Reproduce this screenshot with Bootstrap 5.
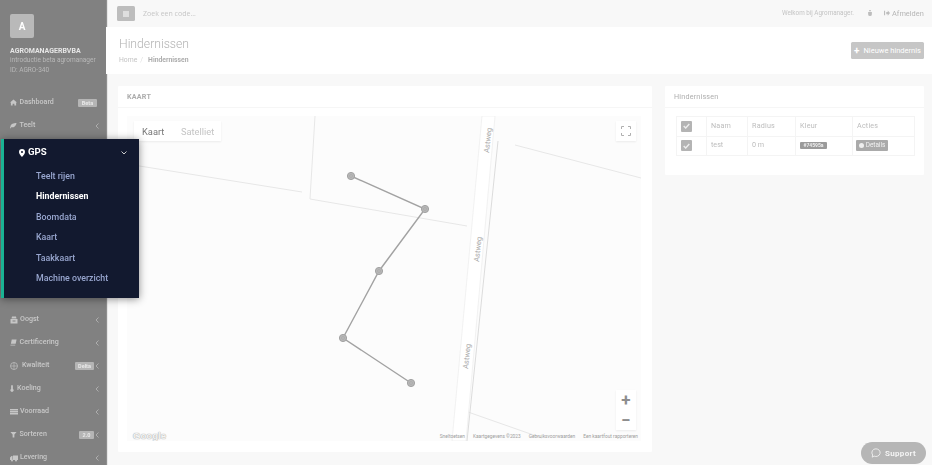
<!DOCTYPE html>
<html lang="nl">
  <head>
    <meta charset="UTF-8" />
    <meta name="viewport" content="width=device-width, initial-scale=1.0" />
    <title>Hindernissen</title>

    <link
      href="https://cdn.jsdelivr.net/npm/bootstrap@5.3.0/dist/css/bootstrap.min.css"
      rel="stylesheet"
    />

    <style>
      html, body { height: 100%; overflow: hidden; }
      body {
        background: #f8f8f8;
        color: #bbb;
        font-family: "Roboto", "Liberation Sans", sans-serif;
        font-size: 7.5px;
        filter: blur(0.45px);
      }
      .shell { height: 465px; }
      /* own layer, keeps the small grey text free of colour fringes */
      .panel-head, .tbl-wrap, .map-type span, .page-head > div, .topbar span { will-change: transform; }

      /* sidebar */
      .side { width: 106px; flex: none; background: #818181; color: #d2d2d2; overflow: hidden; box-shadow: 1px 0 1px #8f8f8f; }
      .side-top { height: 91px; padding: 14px 0 0 10px; white-space: nowrap; }
      .logo-box { width: 24px; height: 24px; background: #b9b9b9; border-radius: 2px; color: #fff; font: 700 10px "Roboto", sans-serif; }
      .org-name { margin-top: 9px; font-weight: 700; font-size: 7px; line-height: 9px; color: #e6e6e6; }
      .org-sub { font-size: 6.5px; line-height: 9.5px; color: #b8b8b8; }
      .side-item { height: 23px; padding: 0 7px 0 10px; font-weight: 500; font-size: 7.1px; color: #c8c8c8; }
      .side-item svg.ico { width: 7px; height: 7px; fill: #c6c6c6; flex: none; margin-right: 2.5px; }
      .side-item svg.ico.wide { width: 8px; height: 8px; margin-right: 2px; }
      .side-item svg.ico.globe { width: 8px; height: 8px; margin-right: 4px; }
      .side-item svg.ico.thin { width: 4px; margin-right: 3px; }
      .side-gap { height: 171px; }
      .chev-l { width: 4px; height: 6px; fill: none; stroke: #adadad; stroke-width: 1; flex: none; }
      .side-tag { background: #b5b5b5; color: #e8e8e8; font-size: 5.5px; font-weight: 700; line-height: 8px; border-radius: 1px; text-align: center; }
      .tag-beta { width: 19px; margin-right: 2px; }
      .tag-delta { width: 19px; margin-right: 1px; }
      .tag-num { width: 15px; margin-right: 1px; }

      /* highlighted menu */
      .gps-menu {
        position: absolute; left: 1px; top: 139px; width: 138px; height: 159px;
        background: #12192f; border-left: 3px solid #1ab394;
        box-shadow: 0 1px 8px rgba(0, 0, 0, .45);
      }
      .gps-head { height: 27px; padding: 0 12px 0 15px; color: #fff; font-size: 9.6px; font-weight: 700; }
      .gps-head svg.pin { width: 6px; height: 8px; fill: #fff; margin-right: 3px; }
      .gps-head svg.down { width: 6px; height: 4px; fill: none; stroke: #ccc; stroke-width: 1; }
      .gps-sub { padding-left: 32px; height: 20.4px; line-height: 20.4px; font-size: 8.8px; font-weight: 500; color: #98a6cf; }
      .gps-sub.on { color: #fff; font-weight: 700; }

      /* top */
      .topbar { height: 27px; padding: 0 8px 0 11px; }
      .menu-btn { width: 18px; height: 15px; background: #bdbdbd; border-radius: 1.5px; }
      .menu-btn span { width: 6px; height: 6px; background: #dedede; }
      .search-txt { margin-left: 8px; color: #c6c6c6; font: 7px "Open Sans", sans-serif; }
      .top-right { font-size: 6.3px; color: #c4c4c4; }
      .top-right svg { width: 6px; height: 6px; fill: #bdbdbd; }
      .bug-ico { margin-left: 13px; }
      .out-ico { margin-left: 11px; }
      .logout { color: #b5b5b5; font-size: 7.4px; margin-left: 2px; }
      .page-head { height: 47px; background: #fff; padding: 0 8px 0 13px; }
      .page-title { font-size: 12.2px; font-weight: 300; line-height: 16px; color: #b3b3b3; margin: 0 0 4px; }
      .crumb-row { font-size: 6.8px; line-height: 9px; color: #c3c3c3; }
      .crumb-row b { color: #adadad; font-weight: 700; margin-left: 5px; }
      .crumb-row i { font-style: normal; margin-left: 3px; color: #ddd; }
      .new-btn { width: 73px; height: 17px; padding: 0; border: 0; background: #c6c6c6; color: #fff; font-size: 7.5px; border-radius: 1.5px; white-space: nowrap; }
      .new-btn b { font-size: 10px; line-height: 8px; }

      /* panels */
      .content { padding: 12px 8px 0 12px; gap: 13px; }
      .panel { border: 0; border-radius: 1px; background: #fff; }
      .panel-head { height: 22px; padding: 1px 8px 0 9px; border-bottom: 1px solid #f6f6f6; color: #adadad; font-size: 7.2px; letter-spacing: .2px; }
      .panel-map { width: 534px; height: 366px; }
      .panel-list { width: 259px; height: 89px; }
      .map-wrap { position: relative; margin: 8px 11px 0 9px; width: 514px; height: 325px; background: #fcfcfc; overflow: hidden; }
      .map-wrap svg.roads { display: block; width: 514px; height: 325px; }
      .astweg { font: 7.5px "Roboto", sans-serif; fill: #a9a9a9; }
      .map-ctl { position: absolute; background: #fff; box-shadow: 0 1px 2px rgba(0, 0, 0, .07); }
      .map-type { left: 7px; top: 5px; height: 20px; width: 87px; font: 9.3px "Roboto", sans-serif; color: #c4c4c4; }
      .map-type .cur { color: #777; padding: 0 8px; }
      .map-type .oth { padding: 0 8px 0 9px; }
      .map-full { right: 5px; top: 5px; width: 20px; height: 20px; }
      .map-zoom { right: 5px; top: 274px; width: 20px; height: 40px; }
      .map-zoom div { height: 20px; color: #8e8e8e; font: 700 17px/20px "Roboto", sans-serif; text-align: center; }
      .g-logo { position: absolute; left: 6px; bottom: 0; font: 700 9.6px "Liberation Sans", sans-serif; color: #f4f4f4; text-shadow: 0 0 1px #aaa, 0 0 1px #aaa; }
      .map-attr { position: absolute; right: 3px; bottom: 0; gap: 8px; font: 4.8px/8px "Roboto", sans-serif; color: #9c9c9c; white-space: nowrap; }

      /* table */
      .tbl-wrap { padding: 8px 10px 0 11px; }
      .tbl { width: 238px; table-layout: fixed; margin: 0; font-size: 7.2px; color: #bcbcbc; border-color: #f4f4f4; }
      .tbl > :not(caption) > * > * { padding: 0 0 0 4px; height: 19.5px; vertical-align: middle; background: transparent; color: #bcbcbc; border-color: #f4f4f4; }
      .tbl th { font-weight: 400; letter-spacing: .2px; }
      .tick { width: 11px; height: 11px; background: #b4b4b4; border-radius: 1px; }
      .tick svg { width: 7px; height: 6px; fill: none; stroke: #eee; stroke-width: 1.4; }
      .color-tag { background: #9a9a9a; color: #eee; font-size: 5px; font-weight: 700; line-height: 7px; padding: 0 3px; width: 27px; border-radius: 1px; }
      .det-btn { height: 11px; width: 32px; background: #aaa; color: #f2f2f2; font-size: 6.4px; border-radius: 1px; margin-left: -1px; }
      .det-btn span { width: 5px; height: 5px; margin-right: 2px; border-radius: 50%; background: #eee; }

      .support-btn {
        position: absolute; left: 861px; top: 442px; width: 65px; height: 22px;
        background: #b6b6b6; color: #f4f4f4; border-radius: 11px;
        font: 700 8px "Roboto", sans-serif; letter-spacing: .3px;
      }
      .support-btn svg { width: 10px; height: 10px; fill: none; stroke: #f4f4f4; stroke-width: 1; margin-right: 4px; }
    </style>
  </head>

  <body>
    <div class="shell d-flex position-relative">
      <aside class="side">
        <div class="side-top">
          <div class="logo-box d-flex align-items-center justify-content-center">A</div>
          <div class="org-name">AGROMANAGERBVBA</div>
          <div class="org-sub">introductie beta agromanager</div>
          <div class="org-sub">ID: AGRO-340</div>
        </div>

        <div class="side-item d-flex align-items-center">
          <svg class="ico" viewBox="0 0 16 16"><path d="M8 1 0 8h2v7h4v-4h4v4h4V8h2z"/></svg>
          <span>Dashboard</span>
          <span class="side-tag tag-beta ms-auto">Beta</span>
        </div>
        <div class="side-item d-flex align-items-center">
          <svg class="ico" viewBox="0 0 16 16"><path d="M15 2C8 2 2 4 1 10l-1 4 2 .5.7-2.5C9 13 14 9 15 2z"/></svg>
          <span>Teelt</span>
          <svg class="chev-l ms-auto" viewBox="0 0 4 6"><path d="M3.5.5 1 3l2.5 2.5"/></svg>
        </div>
        <div class="side-gap"></div>
        <div class="side-item d-flex align-items-center">
          <svg class="ico wide" viewBox="0 0 16 16"><path d="M4 1h8l1 4H3zM1 6h14v9H1zm4 3v2h6V9z"/></svg>
          <span>Oogst</span>
          <svg class="chev-l ms-auto" viewBox="0 0 4 6"><path d="M3.5.5 1 3l2.5 2.5"/></svg>
        </div>
        <div class="side-item d-flex align-items-center">
          <svg class="ico" viewBox="0 0 16 16"><path d="M4 1h11l-2 10H2zM1 13h11v2H1z"/></svg>
          <span>Certificering</span>
          <svg class="chev-l ms-auto" viewBox="0 0 4 6"><path d="M3.5.5 1 3l2.5 2.5"/></svg>
        </div>
        <div class="side-item d-flex align-items-center">
          <svg class="ico globe" viewBox="0 0 16 16"><circle cx="8" cy="8" r="7" fill="none" stroke="#c6c6c6" stroke-width="1.4"/><path d="M1 8h14M8 1v14" stroke="#c6c6c6" stroke-width="1.2"/></svg>
          <span>Kwaliteit</span>
          <span class="side-tag tag-delta ms-auto">Delta</span>
          <svg class="chev-l" viewBox="0 0 4 6"><path d="M3.5.5 1 3l2.5 2.5"/></svg>
        </div>
        <div class="side-item d-flex align-items-center">
          <svg class="ico thin" viewBox="0 0 8 16"><path d="M2 2a2 2 0 0 1 4 0v7a3.6 3.6 0 1 1-4 0z"/></svg>
          <span>Koeling</span>
          <svg class="chev-l ms-auto" viewBox="0 0 4 6"><path d="M3.5.5 1 3l2.5 2.5"/></svg>
        </div>
        <div class="side-item d-flex align-items-center">
          <svg class="ico wide" viewBox="0 0 16 16"><path d="M0 2h16v3H0zm0 4h16v3H0zm0 4h16v3H0z"/></svg>
          <span>Voorraad</span>
          <svg class="chev-l ms-auto" viewBox="0 0 4 6"><path d="M3.5.5 1 3l2.5 2.5"/></svg>
        </div>
        <div class="side-item d-flex align-items-center">
          <svg class="ico" viewBox="0 0 16 16"><path d="M1 2h14L10 8v7H6V8z"/></svg>
          <span>Sorteren</span>
          <span class="side-tag tag-num ms-auto">2.0</span>
          <svg class="chev-l" viewBox="0 0 4 6"><path d="M3.5.5 1 3l2.5 2.5"/></svg>
        </div>
        <div class="side-item d-flex align-items-center">
          <svg class="ico wide" viewBox="0 0 16 16"><path d="M6 3h10v9H6zM0 7l3-3h2v8H0z"/><circle cx="4" cy="13" r="2"/><circle cx="12" cy="13" r="2"/></svg>
          <span>Levering</span>
          <svg class="chev-l ms-auto" viewBox="0 0 4 6"><path d="M3.5.5 1 3l2.5 2.5"/></svg>
        </div>
      </aside>

      <main class="flex-grow-1 d-flex flex-column">
        <div class="topbar d-flex align-items-center">
          <div class="menu-btn d-flex align-items-center justify-content-center"><span></span></div>
          <span class="search-txt">Zoek een code...</span>
          <div class="top-right d-flex align-items-center ms-auto">
            <span>Welkom bij Agromanager.</span>
            <svg class="bug-ico" viewBox="0 0 16 16"><path d="M5 3a3 3 0 0 1 6 0zM3 5h10v6a5 5 0 0 1-10 0z"/></svg>
            <svg class="out-ico" viewBox="0 0 16 16"><path d="M0 2h3v12H0zm6 3h4V1l6 7-6 7v-4H6z"/></svg>
            <span class="logout">Afmelden</span>
          </div>
        </div>

        <div class="page-head d-flex align-items-center justify-content-between">
          <div>
            <h2 class="page-title">Hindernissen</h2>
            <div class="crumb-row">Home<i>/</i><b>Hindernissen</b></div>
          </div>
          <button class="btn new-btn d-flex align-items-center justify-content-center gap-1"><b>+</b>Nieuwe hindernis</button>
        </div>

        <div class="content d-flex align-items-start">
          <section class="card panel panel-map">
            <div class="panel-head d-flex align-items-center fw-bold">KAART</div>
            <div class="map-wrap">
              <svg class="roads" viewBox="127 115 514 325">
                <g fill="none" stroke="#e7e7e7" stroke-width="1">
                  <path d="M315 115 310 198 467 225"/>
                  <path d="M127 163 302 191"/>
                  <path d="M515 144 641 177"/>
                  <path d="M468 411 542 437"/>
                </g>
                <path d="M482 115h13l-29 325h-14z" fill="#fff" stroke="#ececec" stroke-width=".7"/>
                <path d="M498 140 467 440" fill="none" stroke="#dcdcdc" stroke-width="1"/>
                <text class="astweg" transform="translate(489 152) rotate(-84)">Astweg</text>
                <text class="astweg" transform="translate(479 261) rotate(-84)">Astweg</text>
                <text class="astweg" transform="translate(468 368) rotate(-84)">Astweg</text>
                <path d="M351 175 425 208 379 270 343 337 411 382" fill="none" stroke="#a2a2a2" stroke-width="1.4"/>
                <g fill="#b8b8b8" stroke="#a2a2a2" stroke-width="1">
                  <circle cx="351" cy="175" r="3.6"/>
                  <circle cx="425" cy="208" r="3.6"/>
                  <circle cx="379" cy="270" r="3.6"/>
                  <circle cx="343" cy="337" r="3.6"/>
                  <circle cx="411" cy="382" r="3.6"/>
                </g>
                <g fill="none" stroke="#a6a6a6" stroke-width=".6">
                  <circle cx="351" cy="175" r="1.5"/>
                  <circle cx="425" cy="208" r="1.5"/>
                  <circle cx="379" cy="270" r="1.5"/>
                  <circle cx="343" cy="337" r="1.5"/>
                  <circle cx="411" cy="382" r="1.5"/>
                </g>
              </svg>
              <div class="map-ctl map-type d-flex align-items-center">
                <span class="cur">Kaart</span><span class="oth">Satelliet</span>
              </div>
              <div class="map-ctl map-full d-flex align-items-center justify-content-center">
                <svg width="10" height="10" viewBox="0 0 10 10" fill="none" stroke="#b0b0b0" stroke-width="1"><path d="M.5 3V.5H3M7 .5h2.5V3M9.5 7v2.5H7M3 9.5H.5V7"/></svg>
              </div>
              <div class="map-ctl map-zoom">
                <div>+</div>
                <div>−</div>
              </div>
              <div class="g-logo">Google</div>
              <div class="map-attr d-flex">
                <span>Sneltoetsen</span><span>Kaartgegevens ©2023</span><span>Gebruiksvoorwaarden</span><span>Een kaartfout rapporteren</span>
              </div>
            </div>
          </section>

          <section class="card panel panel-list">
            <div class="panel-head d-flex align-items-center">Hindernissen</div>
            <div class="tbl-wrap">
              <table class="table table-bordered tbl">
                <colgroup>
                  <col style="width: 30px" /><col style="width: 41px" /><col style="width: 48px" /><col style="width: 57px" /><col style="width: 62px" />
                </colgroup>
                <thead>
                  <tr>
                    <th><div class="tick d-flex align-items-center justify-content-center"><svg viewBox="0 0 7 6"><path d="M.7 3 2.7 5 6.3 1"/></svg></div></th>
                    <th>Naam</th><th>Radius</th><th>Kleur</th><th>Acties</th>
                  </tr>
                </thead>
                <tbody>
                  <tr>
                    <td><div class="tick d-flex align-items-center justify-content-center"><svg viewBox="0 0 7 6"><path d="M.7 3 2.7 5 6.3 1"/></svg></div></td>
                    <td>test</td>
                    <td>0 m</td>
                    <td><span class="color-tag d-block text-center">#74595a</span></td>
                    <td><div class="det-btn d-flex align-items-center justify-content-center"><span></span>Details</div></td>
                  </tr>
                </tbody>
              </table>
            </div>
          </section>
        </div>
      </main>

      <div class="gps-menu">
        <div class="gps-head d-flex align-items-center">
          <svg class="pin" viewBox="0 0 12 16"><path fill-rule="evenodd" d="M6 0a6 6 0 0 1 6 6c0 4-6 10-6 10S0 10 0 6a6 6 0 0 1 6-6zm0 4a2 2 0 1 0 0 4 2 2 0 0 0 0-4z"/></svg>
          <span>GPS</span>
          <svg class="down ms-auto" viewBox="0 0 6 4"><path d="M.5.5 3 3 5.5.5"/></svg>
        </div>
        <div class="gps-sub">Teelt rijen</div>
        <div class="gps-sub on">Hindernissen</div>
        <div class="gps-sub">Boomdata</div>
        <div class="gps-sub">Kaart</div>
        <div class="gps-sub">Taakkaart</div>
        <div class="gps-sub">Machine overzicht</div>
      </div>

      <div class="support-btn d-flex align-items-center justify-content-center">
        <svg viewBox="0 0 12 12"><path d="M6 1a5 4.6 0 1 1-2.3 8.7L1.4 11l.6-2.6A4.6 4.6 0 0 1 6 1z"/></svg>
        Support
      </div>
    </div>

    <script src="https://cdn.jsdelivr.net/npm/bootstrap@5.3.0/dist/js/bootstrap.bundle.min.js"></script>
  </body>
</html>
